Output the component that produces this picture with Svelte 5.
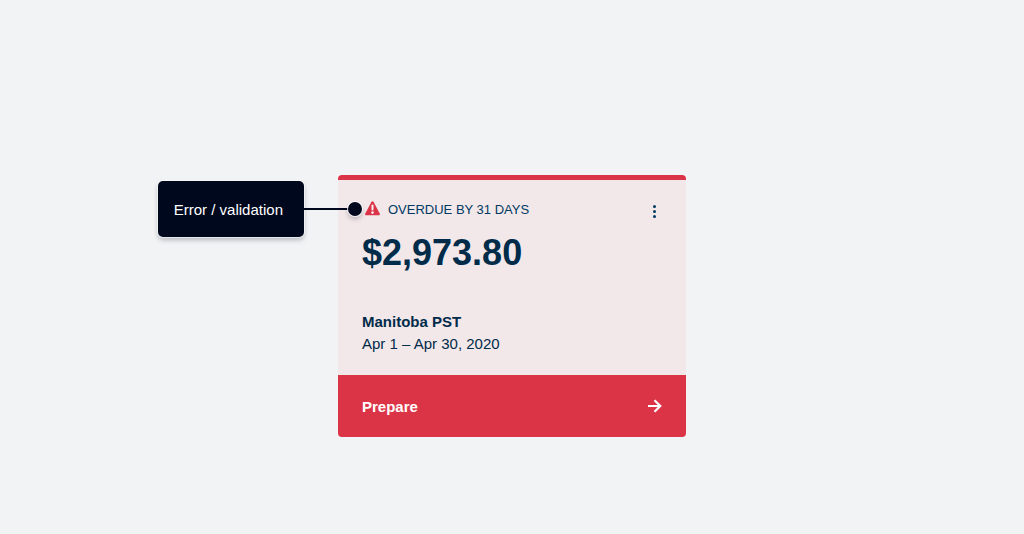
<script>
  const filing = {
    status: 'OVERDUE BY 31 DAYS',
    amount: '$2,973.80',
    name: 'Manitoba PST',
    period: 'Apr 1 – Apr 30, 2020',
  };
</script>

<main class="page">
  <article class="card">
    <div class="body">
      <header class="top">
        <p class="status">
          <svg class="warning" width="15" height="18" viewBox="0 0 15 18" aria-hidden="true">
            <path d="M7.5.2c.5 0 .8.2 1 .6l6.2 11.8c.5.8 0 1.6-.9 1.6H1.2c-.9 0-1.4-.8-.9-1.6L6.5.8c.2-.4.5-.6 1-.6Z" fill="#dc3447" />
            <path d="M7.5 4.6v4" stroke="#f8eff0" stroke-width="2" stroke-linecap="round" />
            <circle cx="7.5" cy="11.6" r="1.3" fill="#f8eff0" />
          </svg>
          <span>{filing.status}</span>
        </p>
        <button class="menu" type="button" aria-label="More options">
          <svg width="3" height="13" viewBox="0 0 3 13" aria-hidden="true">
            <circle cx="1.5" cy="1.5" r="1.5" />
            <circle cx="1.5" cy="6.5" r="1.5" />
            <circle cx="1.5" cy="11.5" r="1.5" />
          </svg>
        </button>
      </header>
      <p class="amount">{filing.amount}</p>
      <h2 class="name">{filing.name}</h2>
      <p class="period">{filing.period}</p>
    </div>
    <button class="action" type="button">
      <span>Prepare</span>
      <svg width="16" height="16" viewBox="0 0 16 16" aria-hidden="true">
        <path d="M1 7h12.5M7.5 1.2 13.3 7 7.5 12.8" fill="none" stroke="#fff" stroke-width="2.2" />
      </svg>
    </button>
    <div class="callout">
      <span class="label">Error / validation</span>
      <span class="line"></span>
      <span class="dot"></span>
    </div>
  </article>
</main>

<style>
  :global(body) {
    margin: 0;
    background: #f1f3f5;
  }
  .page {
    display: flex;
    justify-content: center;
    padding: 175px 24px 96px;
    font-family: "Liberation Sans", Arial, sans-serif;
    color: #002b49;
  }
  .card {
    position: relative;
    width: 100%;
    max-width: 348px;
  }
  .body {
    padding: 20px 24px;
    border-top: 5px solid #dc3447;
    border-radius: 4px 4px 0 0;
    background: #f2e7e9;
  }
  p,
  h2 {
    margin: 0;
  }
  .top {
    display: flex;
    align-items: center;
    justify-content: space-between;
  }
  .status {
    display: flex;
    align-items: center;
    gap: 8px;
    margin-left: 3px;
    font-size: 13px;
    line-height: 20px;
    color: #003a63;
  }
  .menu {
    display: flex;
    justify-content: center;
    width: 16px;
    padding: 2px 0 0;
    border: 0;
    background: none;
    fill: #003a63;
    cursor: pointer;
  }
  .amount {
    margin-bottom: 30px;
    padding-top: 5px;
    font-size: 36px;
    font-weight: 700;
    line-height: 56px;
  }
  .name,
  .period {
    font-size: 15px;
    line-height: 22px;
  }
  .action {
    display: flex;
    align-items: center;
    justify-content: space-between;
    width: 100%;
    padding: 21px 23px 19px 24px;
    border: 0;
    border-radius: 0 0 4px 4px;
    background: #dc3447;
    color: #fff;
    font: 700 15px/22px "Liberation Sans", Arial, sans-serif;
    cursor: pointer;
  }
  .callout {
    position: absolute;
    top: 6px;
    right: calc(100% - 24px);
    display: flex;
    align-items: center;
    color: #fff;
    white-space: nowrap;
  }
  .label {
    padding: 19px 21px 17px 16px;
    border-radius: 5px;
    background: #00081d;
    box-shadow: 0 0 0 1px rgba(255, 255, 255, 0.6), 0 3px 5px rgba(0, 8, 29, 0.25);
    font-size: 15px;
    line-height: 20px;
  }
  .line {
    width: 44px;
    height: 2px;
    background: #00081d;
  }
  .dot {
    width: 14px;
    height: 14px;
    border-radius: 50%;
    background: #00081d;
    box-shadow: 0 0 0 1px rgba(255, 255, 255, 0.8), 0 3px 5px rgba(0, 8, 29, 0.25);
  }
</style>
